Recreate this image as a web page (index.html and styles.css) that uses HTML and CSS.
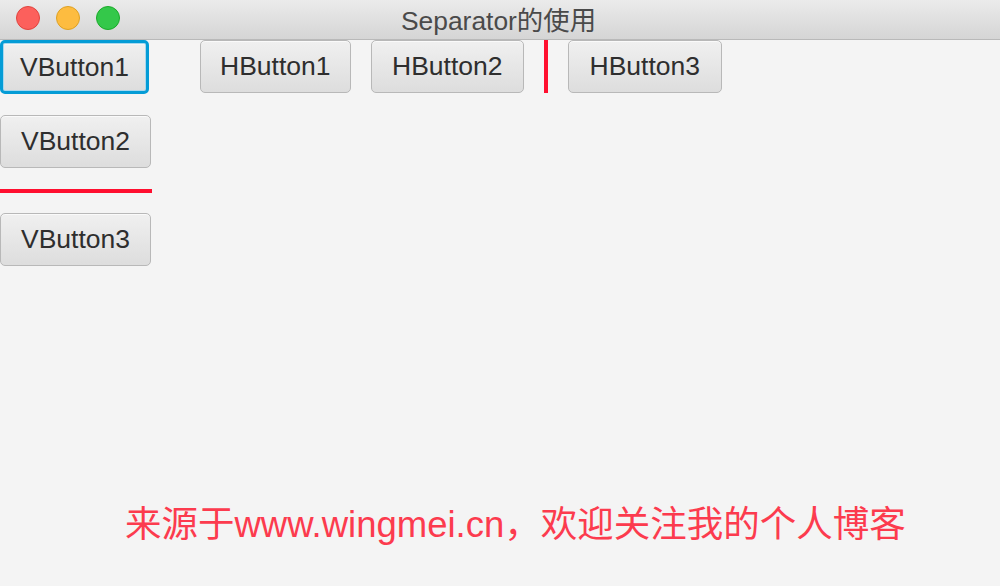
FILE: index.html
```html
<!DOCTYPE html>
<html lang="zh-CN">
<head>
<meta charset="utf-8">
<title>Separator的使用</title>
<link rel="stylesheet" href="styles.css">
</head>
<body>
<div class="window">
  <div class="titlebar">
    <div class="lights">
      <span class="light red"></span>
      <span class="light yellow"></span>
      <span class="light green"></span>
    </div>
    <div class="title">Separator的使用</div>
  </div>
  <div class="content">
    <div class="vcol">
      <button class="btn focused">VButton1</button>
      <button class="btn">VButton2</button>
      <div class="hsep"></div>
      <button class="btn">VButton3</button>
    </div>
    <div class="hrow">
      <button class="btn">HButton1</button>
      <button class="btn wide">HButton2</button>
      <div class="vsep"></div>
      <button class="btn wider">HButton3</button>
    </div>
  </div>
  <div class="footer">来源于www.wingmei.cn，欢迎关注我的个人博客</div>
</div>
</body>
</html>
```
FILE: styles.css
```css
html, body {
  margin: 0;
  padding: 0;
}
body {
  background: #f4f4f4;
  font-family: "Liberation Sans", "Noto Sans CJK SC", sans-serif;
  width: 1000px;
  height: 586px;
  overflow: hidden;
}
.window {
  display: flex;
  flex-direction: column;
  height: 586px;
}
.titlebar {
  position: relative;
  height: 39px;
  border-bottom: 1px solid #b9b9b9;
  background: linear-gradient(#ebebeb, #d5d5d5);
  display: flex;
  align-items: center;
  justify-content: center;
}
.lights {
  position: absolute;
  left: 16px;
  top: 6px;
  display: flex;
  gap: 16px;
}
.light {
  width: 22px;
  height: 22px;
  border-radius: 50%;
  display: block;
}
.light.red { background: #fc605c; border: 1px solid #e0443e; }
.light.yellow { background: #fdbc40; border: 1px solid #dea123; }
.light.green { background: #34c84a; border: 1px solid #1aab29; }
.title {
  font-size: 26.4px;
  color: #4a4a4a;
  padding-bottom: 2px;
  margin-left: -3px;
}
.content {
  display: flex;
  align-items: flex-start;
}
.vcol {
  display: flex;
  flex-direction: column;
  align-items: flex-start;
  width: 152px;
}
.btn {
  font-family: "Liberation Sans", sans-serif;
  font-size: 26.5px;
  color: #2e2e2e;
  height: 53px;
  padding: 0 19px;
  border: 1px solid #b8b8b8;
  border-radius: 5px;
  background: linear-gradient(#f0f0f0, #dddddd);
  box-shadow: inset 0 1px 0 #fafafa;
  display: inline-flex;
  align-items: center;
  justify-content: center;
  margin: 0;
}
.btn.wide { padding: 0 20.5px; }
.btn.wider { padding: 0 20.5px; }
.vcol .btn:not(.focused) { padding: 0 20px; }
.vcol .btn + .btn { margin-top: 21px; }
.vcol .btn.focused {
  height: 54px;
  padding: 0 17px;
  border: 3px solid #049cd6;
  box-shadow: inset 0 0 0 1px #a9d8ee, inset 0 2px 0 #f6f6f6;
}
.hsep {
  width: 152px;
  height: 4px;
  background: #ff0f2f;
  margin: 21px 0 20px;
}
.hrow {
  display: flex;
  align-items: stretch;
  gap: 20px;
  margin-left: 48px;
}
.vsep {
  width: 4px;
  background: #ff0f2f;
}
.footer {
  margin-top: 241px;
  margin-left: 125px;
  font-size: 36.5px;
  line-height: 36px;
  color: #fc3b4e;
  white-space: nowrap;
}
```
